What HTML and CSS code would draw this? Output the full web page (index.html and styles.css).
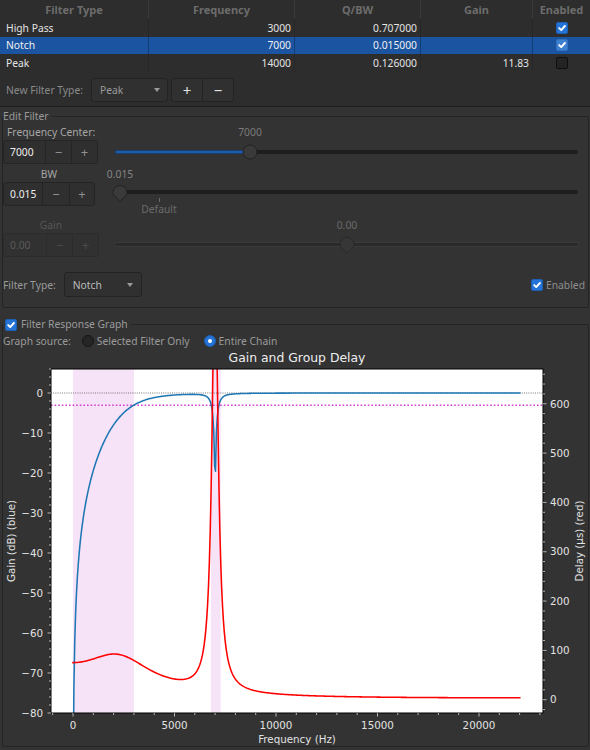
FILE: index.html
```html
<!DOCTYPE html>
<html lang="en">
<head>
<meta charset="utf-8">
<title>Filter Editor</title>
<link rel="stylesheet" href="styles.css">
</head>
<body>
<div class="top">
  <div class="table">
    <div class="trow thead">
      <div class="cell">Filter Type</div>
      <div class="cell">Frequency</div>
      <div class="cell">Q/BW</div>
      <div class="cell">Gain</div>
      <div class="cell">Enabled</div>
    </div>
    <div class="trow">
      <div class="cell">High Pass</div>
      <div class="cell num">3000</div>
      <div class="cell num">0.707000</div>
      <div class="cell num"></div>
      <div class="cell chk"><span class="cb on"><svg width="10" height="10" viewBox="0 0 10 10"><path d="M2.2 5.1 L4.2 7.1 L7.9 3" fill="none" stroke="#fff" stroke-width="1.9" stroke-linecap="round" stroke-linejoin="round"/></svg></span></div>
    </div>
    <div class="trow sel">
      <div class="cell">Notch</div>
      <div class="cell num">7000</div>
      <div class="cell num">0.015000</div>
      <div class="cell num"></div>
      <div class="cell chk"><span class="cb on"><svg width="10" height="10" viewBox="0 0 10 10"><path d="M2.2 5.1 L4.2 7.1 L7.9 3" fill="none" stroke="#fff" stroke-width="1.9" stroke-linecap="round" stroke-linejoin="round"/></svg></span></div>
    </div>
    <div class="trow">
      <div class="cell">Peak</div>
      <div class="cell num">14000</div>
      <div class="cell num">0.126000</div>
      <div class="cell num">11.83</div>
      <div class="cell chk"><span class="cb off"></span></div>
    </div>
  </div>
  <div class="newrow">
    <span class="lbl">New Filter Type:</span>
    <div class="combo combo-new"><span>Peak</span><span class="arrow"></span></div>
    <div class="btns"><span class="btn">+</span><span class="btn">−</span></div>
  </div>
</div>

<fieldset class="group edit">
  <legend>Edit Filter</legend>

  <div class="param p1">
    <div class="plabel left">Frequency Center:</div>
    <div class="pvalue"><span class="vlabel v1" style="left:29.16%">7000</span></div>
    <div class="spin s1"><span class="sval">7000</span><span class="sbtn">−</span><span class="sbtn">+</span></div>
    <div class="slider">
      <div class="groove g1">
        <div class="fill" style="width:29.16%"></div>
        <span class="handle round" style="left:29.16%"></span>
      </div>
    </div>
  </div>

  <div class="param p2">
    <div class="plabel center w92">BW</div>
    <div class="pvalue"><span class="vlabel v2" style="left:1.08%">0.015</span></div>
    <div class="spin s2"><span class="sval">0.015</span><span class="sbtn">−</span><span class="sbtn">+</span></div>
    <div class="slider">
      <div class="groove g2">
        <span class="tick" style="left:9.5%"></span>
        <span class="deflabel" style="left:9.5%">Default</span>
        <svg class="handle pin" style="left:1.08%" width="15" height="17" viewBox="0 0 15 17"><path d="M7.5 16.4 L1.3 10.2 Q0.5 9.4 0.5 8.4 L0.5 7.5 A7 7 0 0 1 14.5 7.5 L14.5 8.4 Q14.5 9.4 13.7 10.2 Z" fill="#3a3a3a" stroke="#222222" stroke-width="1"/></svg>
      </div>
    </div>
  </div>

  <div class="param p3 disabled">
    <div class="plabel center w96">Gain</div>
    <div class="pvalue"><span class="vlabel v3" style="left:50.1%">0.00</span></div>
    <div class="spin s3"><span class="sval">0.00</span><span class="sbtn">−</span><span class="sbtn">+</span></div>
    <div class="slider">
      <div class="groove g3">
        <svg class="handle pin" style="left:50.1%" width="15" height="17" viewBox="0 0 15 17"><path d="M7.5 16.4 L1.3 10.2 Q0.5 9.4 0.5 8.4 L0.5 7.5 A7 7 0 0 1 14.5 7.5 L14.5 8.4 Q14.5 9.4 13.7 10.2 Z" fill="#363636" stroke="#2a2a2a" stroke-width="1"/></svg>
      </div>
    </div>
  </div>

  <div class="ftrow">
    <span class="lbl">Filter Type:</span>
    <div class="combo combo-ft"><span>Notch</span><span class="arrow"></span></div>
    <label class="enabled"><span class="cb on"><svg width="10" height="10" viewBox="0 0 10 10"><path d="M2.2 5.1 L4.2 7.1 L7.9 3" fill="none" stroke="#fff" stroke-width="1.9" stroke-linecap="round" stroke-linejoin="round"/></svg></span><span>Enabled</span></label>
  </div>
</fieldset>

<fieldset class="group graph">
  <legend><span class="cb on"><svg width="10" height="10" viewBox="0 0 10 10"><path d="M2.2 5.1 L4.2 7.1 L7.9 3" fill="none" stroke="#fff" stroke-width="1.9" stroke-linecap="round" stroke-linejoin="round"/></svg></span><span class="legtext">Filter Response Graph</span></legend>
  <div class="srcrow">
    <span class="lbl">Graph source:</span>
    <span class="radio r1"></span><span>Selected Filter Only</span>
    <span class="radio on r2"></span><span>Entire Chain</span>
  </div>
  <svg class="chart" width="585" height="398" viewBox="3 348 585 398">
    <defs>
      <clipPath id="axclip"><rect x="51" y="369" width="492" height="344"/></clipPath>
    </defs>
    <text class="ctitle" x="297" y="361.5" text-anchor="middle">Gain and Group Delay</text>
    <rect x="51" y="369" width="492" height="344" fill="#ffffff"/>
    <rect x="73" y="369" width="60.9" height="344" fill="#f7e3f7"/>
    <rect x="211" y="369" width="9.7" height="344" fill="#f7e3f7"/>
    <line x1="51" y1="393" x2="543" y2="393" stroke="#555555" stroke-width="0.8" stroke-dasharray="1 1.2"/>
    <line x1="51" y1="405.2" x2="543" y2="405.2" stroke="#d23ed2" stroke-width="1.6" stroke-dasharray="1.6 2"/>
    <g clip-path="url(#axclip)">
      <path id="gainpath" d="" fill="none" stroke="#1f77b4" stroke-width="1.55" stroke-linejoin="round" stroke-linecap="square"/>
      <path id="delaypath" d="" fill="none" stroke="#ff0000" stroke-width="1.55" stroke-linejoin="round" stroke-linecap="square"/>
    </g>
    <rect x="51" y="369" width="492" height="344" fill="none" stroke="#000000" stroke-width="1"/>
    <g id="ticks" stroke="#d6d6d6" stroke-width="0.8"></g>
    <g class="tl" text-anchor="end">
      <text x="43" y="396.7">0</text>
      <text x="43" y="436.7">−10</text>
      <text x="43" y="476.7">−20</text>
      <text x="43" y="516.7">−30</text>
      <text x="43" y="556.7">−40</text>
      <text x="43" y="596.7">−50</text>
      <text x="43" y="636.7">−60</text>
      <text x="43" y="676.7">−70</text>
      <text x="43" y="716.7">−80</text>
    </g>
    <g class="tl" text-anchor="start">
      <text x="550" y="407.5">600</text>
      <text x="550" y="456.8">500</text>
      <text x="550" y="506.1">400</text>
      <text x="550" y="555.4">300</text>
      <text x="550" y="604.8">200</text>
      <text x="550" y="654.1">100</text>
      <text x="550" y="703.4">0</text>
    </g>
    <g class="tl" text-anchor="middle">
      <text x="73" y="728.5">0</text>
      <text x="174.5" y="728.5">5000</text>
      <text x="276" y="728.5">10000</text>
      <text x="377.5" y="728.5">15000</text>
      <text x="479" y="728.5">20000</text>
      <text x="297" y="743">Frequency (Hz)</text>
      <text transform="translate(15 541) rotate(-90)">Gain (dB) (blue)</text>
      <text transform="translate(582.5 541) rotate(-90)">Delay (μs) (red)</text>
    </g>
  </svg>
</fieldset>
<script src="script.js"></script>
</body>
</html>
```

FILE: styles.css
```css
* { box-sizing: border-box; }
html, body { margin: 0; padding: 0; }
body {
  width: 590px;
  height: 750px;
  overflow: hidden;
  background: #333333;
  font-family: "Noto Sans", "DejaVu Sans", sans-serif;
  font-size: 10.3px;
  line-height: 14px;
  color: #dddddd;
}

/* ---------- top table ---------- */
.top {
  height: 107px;
  background: #2d2d2d;
  border-bottom: 1px solid #1f1f1f;
}
.table { height: 75px; }
.trow {
  display: grid;
  grid-template-columns: 149px 146px 126px 112px 57px;
  height: 17.5px;
  color: #e4e4e4;
}
.trow.thead { height: 19px; }
.cell {
  display: flex;
  align-items: center;
  padding: 0 3px 0 6px;
  border-right: 1px solid rgba(0, 0, 0, 0.12);
  white-space: nowrap;
  overflow: hidden;
}
.cell:last-child { border-right: none; }
.thead .cell {
  justify-content: center;
  padding: 0;
  font-weight: 700;
  font-size: 11px;
  color: #6c6c6c;
  border-right-color: #3a3a3a;
}
.cell.num { justify-content: flex-end; padding: 0 3px 0 0; }
.cell.chk { justify-content: center; padding: 0; }
.trow.sel { background: #1b54a0; color: #f0f0f0; }
.trow.sel .cell { border-right-color: rgba(0, 0, 0, 0.28); }

.cb {
  display: inline-flex;
  align-items: center;
  justify-content: center;
  width: 12px;
  height: 12px;
  border-radius: 2px;
  flex: none;
}
.cb.on { background: #2473d6; border: 1px solid #1d5fb4; }
.sel .cb.on { background: #3d7fd0; border-color: #3370bd; }
.cb.off { background: #242424; border: 1px solid #0e0e0e; }

.newrow {
  display: flex;
  align-items: flex-start;
  height: 31px;
  padding: 3px 0 0 6px;
}
.newrow .lbl { line-height: 24px; color: #8a8a8a; margin-right: 8px; }

.combo {
  display: flex;
  align-items: center;
  border: 1px solid #232323;
  border-radius: 3px;
  background: #303030;
  padding-left: 8px;
}
.arrow {
  margin-left: auto;
  width: 0;
  height: 0;
  border-left: 3.5px solid transparent;
  border-right: 3.5px solid transparent;
  border-top: 4px solid #9a9a9a;
}
.combo-new { width: 77px; height: 24px; color: #9a9a9a; }
.combo-new .arrow { margin-right: 7px; }

.btns {
  display: flex;
  margin-left: 3px;
  height: 24px;
  border: 1px solid #232323;
  border-radius: 3px;
  background: #303030;
}
.btn {
  display: flex;
  align-items: center;
  justify-content: center;
  width: 30px;
  font-size: 15px;
  color: #e2e2e2;
}
.btn + .btn { border-left: 1px solid #232323; width: 31px; }

/* ---------- group boxes ---------- */
.group {
  margin: 0 1px 0 2px;
  border: 1px solid #242424;
  border-radius: 2px;
  min-width: 0;
}
.group > legend {
  padding: 0 3px 0 0;
  line-height: 14px;
  color: #9a9a9a;
}
.edit { margin-top: 2px; padding: 2px 4px 10px 0; }
.graph { margin-top: 9px; padding: 3px 0 0 0; }

/* ---------- parameter rows ---------- */
.param {
  display: grid;
  grid-template-columns: 109px 1fr;
  grid-template-rows: 15px 24px;
}
.p2 { margin-top: 3px; }
.p3 { margin-top: 12px; }
.plabel { line-height: 15px; color: #a6a6a6; white-space: nowrap; }
.plabel.left { padding-left: 4px; }
.plabel.center { text-align: center; }
.plabel.w92 { width: 92px; }
.plabel.w96 { width: 96px; }
.pvalue { position: relative; margin: 0 6px 0 3px; }
.vlabel {
  position: absolute;
  top: 0;
  transform: translateX(-50%);
  line-height: 15px;
  color: #7b7b7b;
  white-space: nowrap;
}
.v2 { color: #858585; }
.v3 { color: #6a6a6a; }

.spin {
  display: grid;
  grid-template-columns: 1fr 26px 26px;
  height: 24px;
  border: 1px solid #242424;
  border-radius: 3px;
  background: #2f2f2f;
}
.s1 { width: 95px; }
.s2 { width: 92px; grid-template-columns: 1fr 27px 25px; }
.s3 { width: 96px; }
.sval { padding-left: 6px; line-height: 22px; color: #eeeeee; }
.sbtn {
  display: flex;
  align-items: center;
  justify-content: center;
  border-left: 1px solid #242424;
  font-size: 13px;
  color: #8e8e8e;
}
.disabled .plabel { color: #575757; }
.disabled .spin { border-color: #2b2b2b; background: #313131; }
.disabled .sval { color: #5a5a5a; }
.disabled .sbtn { color: #4a4a4a; border-left-color: #2b2b2b; }

.slider { margin: 0 6px 0 3px; }
.groove {
  position: relative;
  height: 4px;
  border-radius: 2px;
  background: #1e1e1e;
}
.g1 { margin-top: 10px; }
.g2 { margin-top: 8px; }
.g3 {
  margin-top: 10px;
  height: 3px;
  background: #2a2a2a;
  box-shadow: 0 0 0 1px #3a3a3a;
}
.fill {
  height: 4px;
  border-radius: 2px;
  background: #1f5cab;
  box-shadow: inset 0 0 0 1px #163f72;
}
.handle { position: absolute; }
.handle.round {
  top: 50%;
  width: 15px;
  height: 15px;
  border-radius: 50%;
  background: #3a3a3a;
  border: 1px solid #222222;
  transform: translate(-50%, -50%);
}
.handle.pin { top: -5px; transform: translateX(-50%); }
.g3 .handle.pin { top: -6px; }
.tick {
  position: absolute;
  top: 8px;
  width: 1px;
  height: 4px;
  background: #6a6a6a;
}
.deflabel {
  position: absolute;
  top: 12px;
  transform: translateX(-50%);
  line-height: 14px;
  color: #6b6b6b;
}

.ftrow {
  display: flex;
  align-items: center;
  height: 25px;
  margin-top: 15px;
}
.ftrow .lbl { color: #9a9a9a; }
.combo-ft { width: 78px; height: 25px; margin-left: 8px; color: #bcbcbc; }
.combo-ft .arrow { margin-right: 8px; }
.enabled {
  display: flex;
  align-items: center;
  gap: 3px;
  margin-left: auto;
  margin-right: -1px;
  color: #8e8e8e;
}

/* ---------- graph group ---------- */
.graph > legend { padding: 0 3px 0 2px; }
.graph > legend .cb { vertical-align: -2px; }
.legtext { margin-left: 4px; }
.srcrow {
  display: flex;
  align-items: center;
  height: 14px;
  color: #9a9a9a;
}
.radio {
  position: relative;
  flex: none;
  width: 12px;
  height: 12px;
  border-radius: 50%;
  background: #262626;
  border: 1px solid #141414;
  margin-right: 3px;
}
.r1 { margin-left: 11px; }
.r2 { margin-left: 14px; }
.radio.on { background: #2473d6; border-color: #1d5fb4; }
.radio.on::after {
  content: "";
  position: absolute;
  left: 3px;
  top: 3px;
  width: 4px;
  height: 4px;
  border-radius: 50%;
  background: #ffffff;
}

.chart { display: block; }
.chart text {
  font-family: "DejaVu Sans", sans-serif;
  font-size: 10.3px;
  fill: #e2e2e2;
}
.chart .ctitle { font-size: 12.4px; fill: #eeeeee; }
```

FILE: script.js
```js
(function () {
  var NS = 'http://www.w3.org/2000/svg';
  var fs = 44100, N = 512;
  var X0 = 73, XS = 0.0203;
  var YG0 = 393, YGS = 4;
  var YD0 = 699.7, YDS = 0.4932;

  function fx(f) { return X0 + f * XS; }
  function gy(d) { return YG0 - d * YGS; }
  function dy(u) { return YD0 - u * YDS; }
  function clamp(v) { return Math.max(200, Math.min(900, v)); }

  function rbj(type, f0, Q) {
    var w0 = 2 * Math.PI * f0 / fs, c = Math.cos(w0), al = Math.sin(w0) / (2 * Q);
    var b = type === 'hp' ? [(1 + c) / 2, -(1 + c), (1 + c) / 2] : [1, -2 * c, 1];
    return { b: b, a: [1 + al, -2 * c, 1 - al] };
  }
  var filters = [rbj('hp', 3000, 0.707), rbj('notch', 7000, 16)];

  function poly(c, w) {
    var dr = 0, di = 0, nr = 0, ni = 0;
    for (var k = 0; k < c.length; k++) {
      var cr = Math.cos(w * k), ci = -Math.sin(w * k);
      dr += c[k] * cr; di += c[k] * ci;
      nr += k * c[k] * cr; ni += k * c[k] * ci;
    }
    var m = dr * dr + di * di;
    return { m: m, g: (nr * dr + ni * di) / m };
  }

  var gp = [], dp = [];
  for (var k = 0; k < N; k++) {
    var w = k === 0 ? 1e-3 : Math.PI * k / N;
    var mag2 = 1, gd = 0;
    for (var i = 0; i < filters.length; i++) {
      var B = poly(filters[i].b, w), A = poly(filters[i].a, w);
      mag2 *= B.m / A.m;
      gd += B.g - A.g;
    }
    var f = k * fs / (2 * N);
    var db = 10 * Math.log10(mag2);
    var us = gd / fs * 1e6;
    var x = fx(f).toFixed(2);
    gp.push((k ? 'L' : 'M') + x + ' ' + clamp(gy(db)).toFixed(2));
    dp.push((k ? 'L' : 'M') + x + ' ' + clamp(dy(us)).toFixed(2));
  }
  document.getElementById('gainpath').setAttribute('d', gp.join(' '));
  document.getElementById('delaypath').setAttribute('d', dp.join(' '));

  var ticks = document.getElementById('ticks');
  function line(x1, y1, x2, y2) {
    var l = document.createElementNS(NS, 'line');
    l.setAttribute('x1', x1); l.setAttribute('y1', y1);
    l.setAttribute('x2', x2); l.setAttribute('y2', y2);
    ticks.appendChild(l);
  }
  var d, y, major;
  for (d = -80; d <= 6; d += 2) {
    y = gy(d); major = (d % 10 === 0);
    line(51 - (major ? 3.5 : 2), y, 51, y);
  }
  for (var fr = -1000; fr <= 23000; fr += 1000) {
    var xx = fx(fr); major = (fr % 5000 === 0);
    line(xx, 713, xx, 713 + (major ? 3.5 : 2));
  }
  for (var u = -20; u <= 660; u += 20) {
    y = dy(u); major = (u % 100 === 0);
    line(543, y, 543 + (major ? 3.5 : 2), y);
  }
})();
```
